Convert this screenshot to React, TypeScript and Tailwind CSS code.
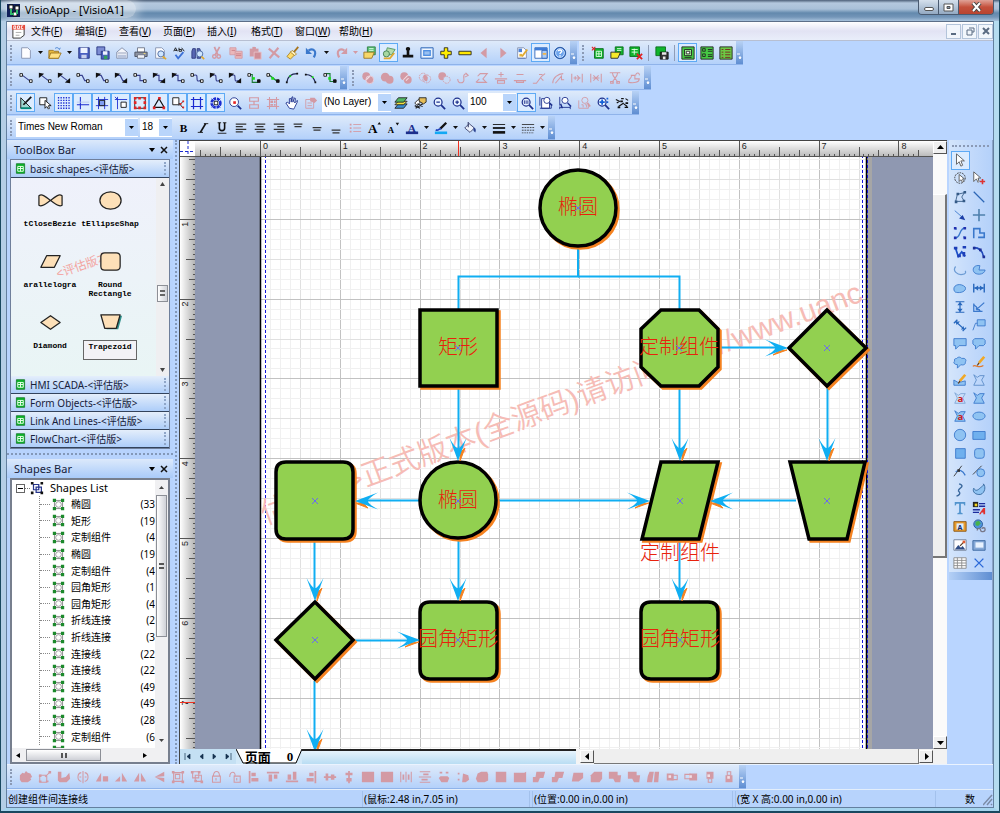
import { Fragment, type ReactNode } from "react";

const NAVY = "#1c2f8c";
const BLUE = "#3a78cc";
const SKY = "#8fc3f2";
const INK = "#111111";
const PALE = "#d39aa4";
const GREEN = "#0fb52c";
const GOLD = "#e0a92e";

function L(d: string, c = INK, w = 1) {
  return <path d={d} fill="none" stroke={c} strokeWidth={w} />;
}

function F(d: string, c = INK, s = "none") {
  return <path d={d} fill={c} stroke={s} />;
}

const page = F("M3 2h7l3 3v9H3z", "#fdfdff", "#8390ad");
const lens = <><circle cx="7" cy="7" r="4.5" fill="#e8f3ff" stroke={NAVY} strokeWidth="1.4" />{L("M10.5 10.5L15 15", NAVY, 2)}</>;
const sheet = <>{F("M2 1h12v14H2z", GREEN, "#0b6b1c")}{L("M4 5h8v7H4zM8 5v7M4 8h8", "#e8ffe8", 1.4)}</>;

// 16x16 glyphs shared by every toolbar
const icons: Record<string, ReactNode> = {
  New: page,
  Open: <>{F("M1 5h5l1 1h5v8H1z", "#e6b93f", "#9a7420")}{F("M3 8h12l-3 6H1z", "#ffe184", "#9a7420")}{L("M8 3c2-2 4-1 5 1l1-2", BLUE)}</>,
  Save: <>{F("M2 2h12v12H2z", "#4a5fc0", "#27357f")}{F("M4 2h8v6H4z", "#eef3ff")}{F("M5 10h6v4H5z", "#c9d1ee")}</>,
  "Save All": <>{F("M1 1h9v9H1z", "#7d8dd4", "#27357f")}{F("M6 6h9v9H6z", "#4a5fc0", "#27357f")}{F("M8 6h5v4H8z", "#eef3ff")}{F("M9 11h4v4H9z", "#35a05c")}</>,
  Mail: <>{F("M2 7l6-5 6 5v7H2z", "#f4f6fb", "#7f8aa6")}{F("M3 10h10v4H3z", "#b9c4dc")}{L("M3 8h10", "#8995b2")}</>,
  Print: <>{F("M4 2h8v5H4z", "#fff", "#6d7485")}{F("M1 7h14v5H1z", "#8d93a1", "#484e5d")}{F("M4 10h8v4H4z", "#f3f5fa", "#6d7485")}{F("M11 8h2v1h-2z", "#ffe36a")}</>,
  Preview: <>{page}<circle cx="9" cy="9" r="3.5" fill="#cfe6ff" stroke="#45639d" />{L("M11 12l4 3", GOLD, 2)}</>,
  Spelling: <>{L("M2 6l2-4 2 4M3 5h3M8 2v4h3V4H8M11 2l3 4", INK)}{L("M4 10l3 4 6-7", "#3a6fd6", 2)}</>,
  Find: <>{F("M2 3h3v11H1V6zM7 3h3l1 3v8H7z", "#5867b4", "#2d397b")}<circle cx="10" cy="9" r="3.5" fill="#cfe6ff" stroke="#45639d" />{L("M12 12l3 3", GOLD, 2)}</>,
  Cut: <>{L("M5 1l4 9M11 1L6 10", PALE, 2)}<circle cx="5" cy="12" r="2" fill="none" stroke={PALE} strokeWidth="1.6" /><circle cx="10" cy="12" r="2" fill="none" stroke={PALE} strokeWidth="1.6" /></>,
  Copy: <>{F("M1 2h7v8H1z", "#eab7ba", PALE)}{F("M7 6h8v8H7z", "#eab7ba", PALE)}{L("M8 9h6M8 11h6M3 5h4", "#c87c85")}</>,
  Paste: <>{F("M2 3h10v9H2z", PALE)}{F("M7 7h8v8H7z", "#cf8e97", "#e8c2c8")}{F("M5 1h4v3H5z", PALE)}</>,
  Delete: L("M2 3l12 10M13 2L3 14", PALE, 2.4),
  "Format Painter": <>{L("M14 1l-5 6", "#a8741d", 2)}{F("M6 6l4 4-5 5-4-3z", "#ffdc6b", "#a8852a")}{F("M7 5l5 4-2 2-5-4z", "#fff1c0", "#a8852a")}</>,
  Undo: <>{L("M4 5c6-3 10 1 6 8", BLUE, 2.4)}{F("M1 2v7h7z", BLUE)}</>,
  Redo: <>{L("M12 5C6 2 2 6 6 13", PALE, 2.4)}{F("M15 2v7H8z", PALE)}</>,
  Library: <>{F("M5 1h9v9H5z", "#59c277", "#2e7d45")}{F("M1 7h12l-3 7H1z", "#f7d76a", "#9a7420")}{L("M7 3h5M7 5h5", "#e5ffe9")}</>,
  "Shape Tools": <>{F("M6 2l9 2-4 6H4z", "#b7dcab", "#4d9460")}<circle cx="5" cy="9" r="3.5" fill="#a7d8a0" stroke="#3f7c50" />{L("M2 14h7l5-6", GOLD, 2)}</>,
  Stamp: <>{F("M8 1a2.500 2.500 0 0 1 1.500 4.500V10H14v3H2v-3h4.500V5.500A2.500 2.500 0 0 1 8 1z")}</>,
  Frame: <>{F("M1 2h14v12H1z", "#cfe2fa", "#2760b4")}{F("M3 4h10v8H3z", "#4f8fe2", "#fff")}{L("M5 7h6M5 9h6", "#d8eafe")}</>,
  Add: <>{F("M6 2h4v4h4v4h-4v4H6v-4H2V6h4z", "#ffee00", "#222")}</>,
  Remove: F("M1 6h14v4H1z", "#ffe600", "#222"),
  Back: F("M11 2v12L4 8z", PALE),
  Forward: F("M5 2v12l7-6z", PALE),
  Properties: <>{page}{F("M4 3h4v4H4z", "#4d82d6")}{F("M5 9h3v3H5z", "#e3b33c")}{L("M14 4L8 12", GOLD, 2.2)}{L("M3 14h9", "#5b77b2")}</>,
  Panels: <>{F("M1 2h14v12H1z", "#fff", "#2b63b8")}{F("M1 2h14v3H1z", "#3f7dd8")}{F("M9 5h6v9H9z", "#aacbf4", "#2b63b8")}{F("M10 8h4v2h-4z", "#f2b64a")}</>,
  Help: <><circle cx="8" cy="8" r="6.500" fill="#3d78d0" stroke="#20509a" /><circle cx="8" cy="8" r="5" fill="#6da4ec" stroke="#d8e9ff" />{L("M6 6c0-2 4-2 4 0 0 1.500-2 1.500-2 3M8 10.500v1.500", "#fff", 1.6)}</>,
  "New Sheet": <>{F("M4 3h10v11H4z", GREEN, "#0b6b1c")}{L("M6 6h6v6H6zM9 6v6M6 9h6", "#e8ffe8")}{L("M1 1l4 4M5 1L1 5", "#e02020", 1.2)}</>,
  "Open Sheet": <>{F("M6 1h9v9H6z", GREEN, "#0b6b1c")}{F("M1 7h11l-3 7H1z", "#f7ea2a", "#222")}{L("M8 3h5M8 5h5", "#e8ffe8")}</>,
  "Delete Sheet": <>{F("M1 1h11v11H1z", GREEN, "#0b6b1c")}{L("M3 4h7M3 7h7M6 3v7", "#e8ffe8")}{L("M9 9l6 6M15 9l-6 6", "#e02020", 2)}</>,
  "Save Sheet": <>{F("M1 1h11v10H1z", GREEN, "#0b6b1c")}{F("M6 7h9v8H6z", "#333", "#111")}{F("M8 7h5v3H8zM9 12h3v3H9z", "#e8e8e8")}</>,
  "Large Icons": <>{F("M1 1h14v14H1z", "#46c944", "#222")}{F("M4 4h8v7H4z", "#a7f29c", "#222")}{F("M6 6h4v3H6z", "#fff", "#222")}{L("M4 13h8", "#222")}</>,
  "Small Icons": <>{F("M1 1h14v14H1z", "#46c944", "#222")}{L("M3 3h3v3H3zM3 9h3v3H3zM9 4h5M9 6h5M9 10h5M9 12h5", "#222")}</>,
  "Detail List": <>{F("M1 1h14v14H1z", "#6bc944", "#222")}{L("M3 4h2M7 4h6M3 7h2M7 7h6M3 10h2M7 10h6M3 13h2M7 13h6", "#722")}</>,
  Draft: <>{F("M2 2v12h12z", "#9fd8d2", INK)}{L("M14 1L5 10", INK, 2)}{L("M2 14h12", "#087", 2)}</>,
  Pick: <>{F("M2 2h8v8H2z", "#fff", INK)}{F("M8 5v9l2-2 2 3 1-1-1-3h3z", "#fff", INK)}</>,
  Dots: <>{[2, 5, 8, 11, 14].map((y) => <path key={y} d={`M1 ${y}h15`} stroke="#1b2bd0" strokeWidth="1.500" strokeDasharray="1.500 1.500" />)}</>,
  Guides: <>{L("M5 1v14M1 10h14", "#1b2bd0", 1.2)}{L("M1 7h14", "#b9c8ee")}</>,
  "Snap Grid": <>{L("M4 1v14M11 1v14M1 4h14M1 11h14", "#1b2bd0")}{F("M5 5h6v6H5z", "#7f9df2", INK)}</>,
  "Snap Ruler": <>{L("M1 4h14M4 1v14M1 1l3 3", "#1b2bd0")}{F("M8 7h6v6H8z", "#fff", INK)}</>,
  "Snap Box": <>{L("M2 2h12v12H2z", INK)}{F("M1 1h3v3H1zM6 1h3v3H6zM12 1h3v3h-3zM1 6h3v3H1zM12 6h3v3h-3zM1 12h3v3H1zM6 12h3v3H6zM12 12h3v3h-3z", "#e52222")}</>,
  "Snap Vertex": <>{L("M8 3L2 13h12z", INK, 1.3)}{F("M7 1h3v3H7zM1 12h3v3H1zM12 12h3v3h-3z", "#e52222")}</>,
  "Snap Glue": <>{F("M2 2h7v8H2z", "#fff", INK)}{L("M9 8l5 6M9 11l5-5", INK)}{F("M10 8h2v2h-2zM13 5h2v2h-2zM13 12h2v2h-2z", "#e52222")}</>,
  "Snap Lines": <>{L("M4 1v14M12 1v14M1 4h14M1 12h14", "#1b2bd0", 1.4)}</>,
  "Snap Page": <>{L("M3 3l10 10M13 3L3 13", "#1b2bd0", 1)}<circle cx="8" cy="8" r="5" fill="none" stroke="#1b2bd0" strokeWidth="3" strokeDasharray="3 1" />{F("M6 6h4v4H6z", "#fff", INK)}</>,
  Zoom: <><circle cx="7" cy="7" r="5" fill="#fff" stroke={NAVY} />{F("M6 6h3v3H6z", "#e52222")}{L("M11 11l4 4", NAVY, 2)}</>,
  Hand: F("M5 14L1 8l2-1 2 2V3h2v4l1-6h1v6l2-5 1 1-1 5 3-3v2l-3 6-1 2z", "#fff", NAVY),
  Distribute: <>{L("M3 2h10v4H3zM3 10h10v4H3zM8 6v4", PALE, 1.4)}</>,
  "Align Grid": <>{L("M1 4h14M1 12h14M4 1v14M12 1v14", PALE, 1.2)}{F("M5 5h3v3H5zM9 5h2v3H9zM5 9h3v2H5zM9 9h2v2H9z", PALE)}</>,
  "Page Hand": <>{L("M2 4h9v10H2zM4 8h5M4 11h5", PALE)}{F("M7 2h5l3 3-3 3-5-2z", PALE)}</>,
  Layers: <>{F("M5 9h10l-4 5H1z", "#3a8dd0", "#222")}{F("M5 6h10l-4 4H1z", "#f1e13c", "#222")}{F("M5 2h10l-4 5H1z", "#53b862", "#222")}</>,
  "Layer Props": <>{F("M2 8l4-4 3 2-4 5z", "#fff", "#222")}{F("M7 2h8v5l-3 2-5-3z", "#e6bd57", "#222")}{L("M2 11l6 3M5 9l6 3M3 14l8-5", "#222", 1.4)}</>,
  "Zoom Out": <>{lens}{L("M5 7h4", NAVY, 1.4)}</>,
  "Zoom In": <>{lens}{L("M5 7h4M7 5v4", NAVY, 1.4)}</>,
  "Zoom 100": <>{lens}{L("M5 5v4M7 5v4M9 5v4", NAVY)}</>,
  "Fit Page": <>{F("M3 3h9v11H3z", "#fff", NAVY)}{L("M1 1v10M1 14h13v-3", NAVY)}<circle cx="9" cy="5" r="3.500" fill="#fff" stroke={NAVY} />{L("M12 8l3 3", NAVY, 2)}</>,
  "Fit Width": <>{L("M2 1v10M2 12v3M14 11v4M2 13h12", NAVY)}<circle cx="8" cy="5" r="3.500" fill="#fff" stroke={NAVY} />{L("M11 8l4 4M3 9l2 5", NAVY, 1.6)}</>,
  "Fit Selection": <>{L("M2 5v9h11V9M5 10h2v3M9 10h2v3", PALE)}<circle cx="9" cy="5" r="3.500" fill="none" stroke={PALE} />{L("M12 8l3 4", PALE, 2)}</>,
  "Zoom Area": <>{lens}{L("M4 7h6M7 4v6", "#1560d8", 2)}{F("M12 2h2v2h-2zM12 6h2v2h-2z", "#1560d8")}</>,
  Path: <>{L("M1 4l4 2-3 2M7 3h3M12 3l3 2M4 12l6-4M10 9l4 3M11 13h4", INK, 1.3)}{F("M6 5h3v2H6zM12 7h3v2h-3zM3 12h3v2H3z")}</>,
  Bold: <text x="3" y="13" fontSize="13" fontWeight="900" fontFamily="Liberation Serif, serif">B</text>,
  Italic: <>{L("M11 3L5 13", INK, 2)}{L("M9 3h5M2 13h6", INK)}</>,
  Underline: <>{L("M5 2v6c0 4 6 4 6 0V2", INK, 1.8)}{L("M3 14h10M3 2h4M9 2h4", INK)}</>,
  Left: L("M2 3.500h12M2 6.500h8M2 9.500h12M2 12.500h8", "#333", 1.4),
  Center: L("M2 3.500h12M4 6.500h8M2 9.500h12M4 12.500h8", "#333", 1.4),
  Right: L("M2 3.500h12M6 6.500h8M2 9.500h12M6 12.500h8", "#333", 1.4),
  Top: L("M3 3.500h10M4 6.500h8", "#333", 1.4),
  Middle: L("M3 7.500h10M4 10.500h8", "#333", 1.4),
  Bottom: L("M3 10.500h10M4 13.500h8", "#333", 1.4),
  Bullets: <>{L("M6 4h9M6 8h9M6 12h9", PALE)}{F("M2 3h2v2H2zM2 7h2v2H2zM2 11h2v2H2z", PALE)}</>,
  Grow: <><text x="1" y="14" fontSize="15" fontWeight="700" fontFamily="Liberation Serif, serif">A</text>{F("M12 4h4l-2-3z")}</>,
  Shrink: <><text x="2" y="14" fontSize="10" fontWeight="700" fontFamily="Liberation Serif, serif">A</text>{F("M11 2h4l-2 3z")}</>,
  "Font Color": <><text x="3" y="12" fontSize="13" fontWeight="700" fill={NAVY} fontFamily="Liberation Serif, serif">A</text>{F("M1 12h14v3H1z", NAVY)}</>,
  "Line Color": <>{L("M14 2L7 9", INK, 2.6)}{L("M2 10c3 2 4-2 6-1", "#2244bb", 2)}{F("M1 12h14v3H1z", "#12a8f4")}</>,
  "Fill Color": <>{F("M7 3l6 5-5 5-6-5z", "#eaf0fb", "#39406a")}{F("M12 7c3 1 3 4 2 6l-2-2z", "#29408f")}{L("M6 1v6", "#39406a", 1.3)}</>,
  "Line Weight": <>{L("M1 4h14", INK)}{L("M1 8h14", INK, 2)}{L("M1 13h14", INK, 3)}</>,
  "Line Style": <>{L("M1 4h14", "#333")}<path d="M1 7.500h14M1 10.500h14" stroke="#333" strokeDasharray="2 1" /><path d="M1 13.500h14" stroke="#333" strokeDasharray="1 1" /></>,
};

// connector glyphs: route path, arrow markers at either end
function Connector({ d, start, end, green }: { d: string; start?: boolean; end?: boolean; green?: boolean }) {
  return (
    <>
      {L(d, green ? "#1a7a35" : "#39428f", 1.3)}
      {start ? F("M1 2v6l6-5z") : F("M1 3h3v3H1z", "#fff", INK)}
      {end ? F("M15 14V8l-6 5z") : F("M12 10h3v3h-3z", green ? INK : "#fff", INK)}
      {green && F("M6 7h3v3H6z", "#19e019")}
    </>
  );
}

const lineRoute = "M4 5l8 6";
const stepRoute = "M4 5h4v6h4";
const curveRoute = "M4 5c8-3 0 9 8 6";
const connectors: [string, ReactNode][] = [
  ["Line", <Connector d={lineRoute} />],
  ["Line start arrow", <Connector d={lineRoute} start />],
  ["Line both arrows", <Connector d={lineRoute} start end />],
  ["Polyline", <Connector d="M4 5h3l3 6h2" />],
  ["Polyline start arrow", <Connector d="M4 5h3l3 6h2" start />],
  ["Polyline both arrows", <Connector d="M4 5h3l3 6h2" start end />],
  ["Step", <Connector d={stepRoute} />],
  ["Step both arrows", <Connector d={stepRoute} start end />],
  ["Step start arrow", <Connector d={stepRoute} start />],
  ["Curve", <Connector d={curveRoute} />],
  ["Curve start arrow", <Connector d={curveRoute} start />],
  ["Curve both arrows", <Connector d={curveRoute} start end />],
  ["Port step", <Connector d="M3 4h3v9h7" green />],
  ["Port line", <Connector d="M3 4l10 8" green />],
  ["Arc", <>{L("M2 13C3 6 7 3 14 3", "#1d2550", 1.4)}{F("M1 12h2v2H1zM13 2h2v2h-2z")}{F("M5 5h2v2H5z", "#19e019")}</>],
  ["Arc right", <>{L("M2 4c6 0 9 3 11 9", "#1d2550", 1.4)}{F("M1 3h2v2H1zM12 12h2v2h-2z")}{F("M9 6h2v2H9z", "#19e019")}</>],
  ["Spline", <Connector d="M3 3h5v9h6" green />],
];

const pale = (d: string) => L(d, PALE, 1.2);
const booleans: [string, ReactNode][] = [
  ["Combine", <><circle cx="6" cy="6" r="4.500" fill={PALE} /><circle cx="10" cy="10" r="4.500" fill={PALE} stroke="#e8d5e2" />{L("M6 10l4-4", "#f3dfe4", 1.4)}</>],
  ["Union", <><circle cx="6" cy="7" r="5" fill={PALE} /><circle cx="11" cy="10" r="4.500" fill={PALE} /></>],
  ["Exclude", <><circle cx="6" cy="6" r="4.500" fill={PALE} /><circle cx="10" cy="10" r="4.500" fill={PALE} />{L("M5 10l5-5M8 11l3-3", "#f3dfe4", 1.2)}</>],
  ["Intersect", <><circle cx="6" cy="7" r="4.500" fill="none" stroke={PALE} strokeDasharray="2 1" /><circle cx="10" cy="9" r="4.500" fill="none" stroke={PALE} strokeDasharray="2 1" />{F("M7 4c4 1 5 5 3 8-4-1-5-5-3-8z", PALE)}</>],
  ["Subtract", <><circle cx="6" cy="6" r="4.500" fill={PALE} /><circle cx="11" cy="10" r="4" fill="#c9dcf7" stroke={PALE} strokeDasharray="2 1" /></>],
  ["Rotate", pale("M2 9c0 6 8 6 7 0s2-7 5-4M11 2l3 3-4 2")],
  ["Reshape", pale("M2 13h11L9 9l5-6H6L3 6M1 13l4-4")],
  ["Raise", pale("M8 1v6M5 4h6M1 9h14M4 11h8v3H4z")],
  ["Lower", pale("M4 4h8M1 11h14M4 13h8v-2H4z")],
  ["Join", pale("M1 14h4l6-8 4-3M8 4h4M10 8l3 3")],
  ["Fillet", pale("M2 14C2 8 8 3 14 3M5 14l7-8v4h3")],
  ["Space H", pale("M2 3v10M14 3v10M4 8h8M6 6v4M8 5l3 3-3 3")],
  ["Pack H", pale("M2 3v10M14 3v10M4 8h8M5 5l3 3-3 3M11 5L8 8l3 3")],
  ["Scissors", pale("M2 2h12M5 2c0 5 5 7 6 11M11 2c0 5-5 7-6 11M3 12h3v2H3zM10 12h3v2h-3z")],
  ["Offset", pale("M2 13c-1-6 4-3 3-8h4v4h5c0 4-6 5-12 4zM10 5c0-4 5-3 4 0")],
];

const solid = (d: string) => <>{F(d, PALE)}</>;
const arrangeGlyphs: ReactNode[] = [
  solid("M1 6l3-3 2 1 2-3 2 2 3 1 2 4-2 1 1 2-4 3H3l-2-3z"),
  <>{pale("M2 6h8v8H2zM8 8l5-5")}{solid("M12 1h3v3h-3zM1 5h3v3H1zM1 12h3v2H1zM9 12h3v2H9z")}</>,
  solid("M1 2h4v7l5-1 4-5 1 7-4 4H3l-2-2z"),
  <>{pale("M8 1v14M6 3C1 4 1 12 6 13M10 3c5 1 5 9 0 10M4 8h2M10 8h2")}</>,
  solid("M7 13V3L1 13zM9 13V7h6v6z"),
  solid("M9 3v10h6zM1 13h6V7z"),
  solid("M7 3v10H1zM9 3v10h6z"),
  solid("M14 2v5L3 8zM14 14V9L3 8z"),
  <>{pale("M3 3h10v10H3zM5 5h5v5H5z")}{solid("M1 1h3v3H1zM12 1h3v3h-3zM1 12h3v3H1zM12 12h3v3h-3z")}</>,
  <>{pale("M3 2h7v7H3zM6 6h7v7H6z")}{solid("M1 1h3v3H1zM9 1h3v3H9zM5 11h3v3H5zM12 12h3v3h-3z")}</>,
  pale("M4 7h9v7H4zM5 7c0-7 7-7 7 0M8 9v3"),
  pale("M7 7h7v7H7zM2 8c0-7 7-7 6-1M10 9v3"),
  solid("M2 1h2v14H2zM5 3h5v4H5zM5 9h8v4H5z"),
  solid("M1 2h14v2H1zM3 5h4v8H3zM9 5h4v5H9z"),
  solid("M1 12h14v2H1zM3 5h4v6H3zM9 2h4v9H9z"),
  solid("M12 1h2v14h-2zM6 3h5v4H6zM3 9h8v4H3z"),
  solid("M1 7h14v2H1zM3 4h3v8H3zM9 5h4v6H9z"),
  solid("M7 1h2v14H7zM4 3h8v3H4zM5 9h6v4H5z"),
  solid("M1 2h14v12H1z"),
  solid("M1 2h14v12H1z"),
  <>{pale("M2 2v12M8 2v12M14 2v12")}{solid("M4 5h2v6H4zM10 5h2v6h-2z")}</>,
  <>{pale("M2 2h12M1 8h14M2 14h12")}{solid("M6 4h6v2H6zM4 10h7v2H4z")}</>,
  solid("M3 2h3v2H3zM10 2h3v2h-3zM4 7h8l2 2-2 5H5L2 9z"),
  solid("M2 3h2v2H2zM2 10h2v2H2zM8 4l6 2 1 5-4 3H7z"),
  solid("M3 4l4-2h7l1 3v7l-4 2H3l-2-4z"),
  solid("M2 2h12v12H2z"),
  solid("M1 3h12l2-1v12H1z"),
  solid("M5 2h10l-2 7H9l-2 5H1V8h3z"),
  solid("M5 2h10l-2 7H9l-2 5H1V8h3z"),
  solid("M4 3h11v6l-5 4H2l1-5z"),
  solid("M6 2h9v8l-3 4H2V6z"),
  solid("M1 2h10v4h4l-1 8H8l-2-4H1z"),
  solid("M1 2h10v4h4l-1 8H8l-2-4H1z"),
  solid("M4 2h5L7 14H1l1-7zM10 2h5l-1 12H9z"),
  <>{solid("M2 4h8v8H2z")}{pale("M8 6h6v5H8z")}{F("M4 6h3v3H4z", "#f1dfe6")}</>,
  <>{solid("M6 4h9v8H6z")}{pale("M1 5h6v5H1z")}{F("M6 6h3v3H6z", "#f1dfe6")}</>,
  <>{solid("M4 2h8v8H4z")}{pale("M6 10h4v4H6z")}{F("M5 5h3v3H5z", "#f1dfe6")}</>,
  <>{solid("M4 6h8v8H4z")}{pale("M6 2h4v4H6z")}{F("M6 7h3v3H6z", "#f1dfe6")}</>,
];

const pencil = <>{L("M14 2L8 9", "#f0a826", 3)}{L("M8 9l-2 3", "#663b12", 1.4)}</>;
const freeform = "M2 2l4 3 3-2h5l-3 5 3 6H2l3-6z";
const blob = "M1 9c0-5 8-7 13-2 2 5-6 7-10 6-2 0-3-2-3-4z";
const drawTools: [string, ReactNode][] = [
  ["Pointer", F("M4 1v12l3-3 2 5 2-1-2-5h4z", "#fff", "#555")],
  ["", null],
  ["Lasso", <><circle cx="8" cy="8" r="6" fill="none" stroke="#333" strokeDasharray="2 1" />{F("M7 4v8l2-2 2 3 1-1-1-3h2z", "#fff", "#555")}</>],
  ["Pointer add", <>{F("M2 1v11l3-3 2 4 1-1-1-4h3z", "#fff", "#555")}{L("M9 12h6M12 9v6", "#d33", 1.8)}</>],
  ["Edit points", <>{L("M3 13l2-8 8-2-3 5 3 5z", "#345a86")}{F("M2 12h3v3H2zM4 3h3v3H4zM12 1h3v3h-3zM11 11h3v3h-3z", "#345a86")}</>],
  ["Line", L("M2 2l12 12", "#2c66b5", 1.4)],
  ["Arrow line", <>{L("M2 3l8 7", BLUE)}{F("M14 14l-7-2 4-4z", "#1c3fa8")}</>],
  ["Cross", L("M8 1v14M1 8h14", "#4e80ad", 1.8)],
  ["Curve line", <>{L("M2 14C10 13 6 3 14 2M2 2l2 2M12 12l2 2", BLUE, 1.6)}{F("M1 1h3v3H1zM12 1h3v3h-3zM1 12h3v3H1zM12 12h3v3h-3z", "#2030b0")}</>],
  ["Polyline", L("M2 14V3h7v5h5v5H7", BLUE, 1.8)],
  ["Bezier", <>{L("M3 4l3 9 4-5 4 5", "#1d50c8", 2)}{F("M1 2h4v3H1zM5 11h4v3H5zM11 1h4v3h-4zM11 8h3v5h-3z", "#1d3fb8")}</>],
  ["Arc line", <>{L("M2 3c7 0 10 4 11 10", "#2149ba", 1.8)}{F("M1 2h3v3H1zM8 4h3v3H8zM12 12h3v3h-3z", "#1d2f98")}</>],
  ["Open arc", L("M3 4c-4 5 2 10 8 9 3 0 4-2 3-4", "#6d9cd4", 1.4)],
  ["Pie", F("M9 3C3 2 0 6 2 10s12 4 13-2H8z", SKY, BLUE)],
  ["Closed curve", F(blob, SKY, BLUE)],
  ["Dim width", <>{L("M2 3v10M14 3v10M3 8h10", "#2868bd", 1.6)}{F("M3 8l4-3v6zM13 8L9 5v6z", "#2868bd")}</>],
  ["Dim height", <>{L("M3 2h10M3 14h10M8 3v10", "#2868bd", 1.4)}{F("M8 2l-3 4h6zM8 14l-3-4h6z", "#2868bd")}</>],
  ["Dim angle", L("M2 4v9h10M2 5c2 2 4 5 8 8M5 11L14 3M5 11V7M5 11h4", BLUE, 1.4)],
  ["Dim line", <>{L("M3 4l10 9M1 6l4-4M11 15l4-4", "#2868bd", 1.5)}{F("M3 4h5l-4 4zM13 13H9l3-4z", "#2868bd")}</>],
  ["Callout line", <>{F("M6 2h9v7H6z", SKY, BLUE)}{L("M6 6L4 6 1 14", BLUE)}</>],
  ["Callout", F("M1 3h14v8H7l-4 4v-4H1z", SKY, BLUE)],
  ["Round callout", F("M3 3h10l2 2v4l-2 2H8l-4 4v-4H3L1 9V5z", SKY, BLUE)],
  ["Cloud", F("M4 4c3-3 5-1 6 0 4-1 6 2 4 4 1 3-3 4-5 3l-4 4v-4C1 11 0 8 2 7 1 5 2 4 4 4z", SKY, BLUE)],
  ["Pencil", <>{pencil}{L("M1 13c3-3 6 3 12-1", "#e07b30", 1.4)}</>],
  ["Pencil area", <>{F("M1 8l5 3 8-2v5H1z", SKY, BLUE)}{pencil}</>],
  ["Open freeform", L(freeform, "#5a8cc8")],
  ["Text freeform", <>{L(freeform, "#7da5d5")}<text x="5" y="13" fontSize="11" fontWeight="700" fill="#cc2222">a</text></>],
  ["Freeform", F(freeform, SKY, BLUE)],
  ["Filled text", <>{F(freeform, SKY, BLUE)}<text x="5" y="13" fontSize="11" fontWeight="700" fill="#cc2222">a</text></>],
  ["Ellipse", <ellipse cx="8" cy="8" rx="7" ry="4.500" fill={SKY} stroke={BLUE} />],
  ["Circle", <circle cx="8" cy="8" r="6.500" fill={SKY} stroke={BLUE} />],
  ["Rectangle", F("M1 4h14v9H1z", "#6fb0ee", BLUE)],
  ["Square", F("M3 3h11v11H3z", "#6fb0ee", BLUE)],
  ["Rounded", <rect x="3" y="3" width="11" height="11" rx="3" fill={SKY} stroke={BLUE} />],
  ["Tangent", <>{L("M1 14L10 2", "#333")}{L("M3 9c4-3 8-2 11 4", BLUE, 1.4)}{F("M5 6h3v3H5z", "#333")}</>],
  ["Tangent area", <>{L("M1 12L11 2", "#333")}<circle cx="10" cy="10" r="4.500" fill={SKY} stroke={BLUE} /></>],
  ["Spline", L("M7 1c9 3-4 6 0 9 2 2 0 4-3 5", "#3c6a9e", 1.6)],
  ["Closed spline", F("M2 6c2 4 5 2 7 0s5-3 4-5c3 3 2 10-3 12C4 14 0 10 2 6z", SKY, "#31659c")],
  ["Text", F("M2 1h12v4h-1l-1-2H9v10l2 1v1H5v-1l2-1V3H4L3 5H2z", "#5294cd")],
  ["Rich text", <>{F("M1 1h6v6H1z", "#222")}{F("M3 3h3v3H3z", "#f5d51e")}{L("M8 3h7M8 6h7M1 10h8M1 13h7", "#1d2b9c", 1.6)}{F("M8 15l5-7h2v7h-2v-2h-2l-1 2z", "#e03030")}</>],
  ["Art text", <>{F("M1 3h14v11H1z", "#e79c2d", "#8a5510")}{F("M4 5h8v7H4z", "#dcecff")}<text x="5" y="12" fontSize="8" fontWeight="700" fill="#15306e">A</text></>],
  ["Hyperlink", <><circle cx="7" cy="6" r="5" fill="#4f94dd" stroke="#27568f" />{F("M4 3l4-1 2 3-3 3-3-1z", "#47b24c")}{L("M6 13c0-4 4-2 4 0s5 2 5-1-3-2-4-1", "#778", 1.5)}</>],
  ["Picture", <>{F("M1 2h14v12H1z", "#fdfdff", "#6d7b96")}{F("M2 13l4-5 3 3 2-2 3 4z", "#2f4c86")}{L("M8 9l4-4", "#5b3a20", 1.4)}{F("M11 3h3v3h-3z", "#e05b32")}</>],
  ["Container", <>{F("M1 3h14v11H1z", "#86a9d8", "#39659e")}{F("M4 5h9v6H4z", "#e8f2ff")}</>],
  ["Grid", <>{F("M1 2h14v12H1z", "#fff", "#888")}{L("M1 5h14M1 8h14M1 11h14M5 2v12M10 2v12", "#888")}</>],
  ["Close", L("M3 3l10 10M13 3L3 13", "#2b68d8", 1.6)],
];

function Glyph({ children, className = "size-4" }: { children: ReactNode; className?: string }) {
  return (
    <svg className={`${className} shrink-0`} viewBox="0 0 16 16" aria-hidden="true">
      {children}
    </svg>
  );
}

function Tool({ label, active, children }: { label: string; active?: boolean; children?: ReactNode }) {
  return (
    <button
      type="button"
      aria-label={label}
      className={`flex h-[19px] w-[19px] shrink-0 items-center justify-center ${
        active ? "border border-[#5eaaf5] bg-[#dcecff]" : ""
      }`}
    >
      <Glyph className="size-[14px]">{children ?? icons[label]}</Glyph>
    </button>
  );
}

function Arrow({ pale: faded }: { pale?: boolean }) {
  return (
    <button type="button" aria-label="More" className="flex h-[19px] w-[10px] shrink-0 items-center justify-center">
      <svg width="5" height="3" aria-hidden="true">
        <path d="M0 0h5L2.500 3z" fill={faded ? PALE : INK} />
      </svg>
    </button>
  );
}

function Sep() {
  return <span className="mx-[3px] h-4 w-px shrink-0 bg-[#8e9db8]" />;
}

function Bar({ children, label }: { children: ReactNode; label: string }) {
  return (
    <div
      role="toolbar"
      aria-label={label}
      className="flex h-6 shrink-0 items-center border-b border-[#8fb3ea] bg-linear-to-b from-[#deeafa] to-[#b4d1fa] pl-[3px]"
    >
      <span className="mr-1 h-4 border-l-2 border-dotted border-[#8b9ab5]" />
      {children}
      <span className="ml-px flex h-full w-[7px] items-end bg-linear-to-b from-[#b8d2f5] to-[#5f8ed2] pb-1">
        <svg width="6" height="7" aria-hidden="true">
          <path d="M1 1h3M3 4h2L4 6z" stroke="#fff" fill="#fff" />
        </svg>
      </span>
    </div>
  );
}

function Combo({ label, value, className }: { label: string; value: string; className: string }) {
  return (
    <div className={`relative flex h-[19px] shrink-0 bg-white ${className}`}>
      <select
        aria-label={label}
        className="h-[17px] w-full appearance-none bg-white pl-[2px] font-['Liberation_Sans',sans-serif] text-[10px] leading-4 text-black outline-none"
      >
        <option>{value}</option>
      </select>
      <span className="pointer-events-none absolute inset-y-px right-0 flex w-[13px] items-center justify-center bg-[#b9d5fb]">
        <svg width="5" height="3" aria-hidden="true">
          <path d="M0 0h5L2.500 3z" />
        </svg>
      </span>
    </div>
  );
}

const menus = [
  ["文件", "F"],
  ["编辑", "E"],
  ["查看", "V"],
  ["页面", "P"],
  ["插入", "I"],
  ["格式", "T"],
  ["窗口", "W"],
  ["帮助", "H"],
];

function TitleBar() {
  return (
    <header className="flex h-[21px] shrink-0 items-start justify-between bg-[linear-gradient(180deg,#4c5f78_0,#b4c8de_3px,#a9c0d8_9px,#6389ad_13px,#7395b8_17px,#a7c2dc_21px)] pl-[5px] pr-[5px]">
      <div className="flex items-center gap-[3px] rounded-full bg-white/45 pr-3 pt-[2px] shadow-[0_0_8px_4px_rgba(255,255,255,0.35)]">
        <svg className="size-4" viewBox="0 0 16 16" aria-hidden="true">
          <path d="M1 2h13v13H1z" fill="#10205a" />
          <path d="M3 3h4v4H3zM9 4h4v4H9zM7 10h4v4H7z" fill="#fff" stroke="#111" />
          <path d="M5 7v5h3M11 8v4" stroke="#2fb56b" fill="none" strokeWidth="2" />
        </svg>
        <h1 className="text-[11px] leading-4 text-black">VisioApp - [VisioA1]</h1>
      </div>
      <div className="flex h-[15px] overflow-hidden rounded-b border border-t-0 border-[#4a5a70]">
        <button type="button" aria-label="Minimize" className="flex w-5 items-end justify-center border-r border-[#4a5a70] bg-linear-to-b from-[#d5e0ec] to-[#93a9c2] pb-[3px]">
          <span className="h-[4px] w-[10px] rounded-sm border border-[#555] bg-white" />
        </button>
        <button type="button" aria-label="Maximize" className="flex w-5 items-center justify-center border-r border-[#4a5a70] bg-linear-to-b from-[#d5e0ec] to-[#93a9c2]">
          <svg width="11" height="9" aria-hidden="true">
            <path d="M1 1h9v7H1z" fill="#fff" stroke="#555" />
            <path d="M4 3.500h3v2H4z" fill="#8195ad" stroke="#555" />
          </svg>
        </button>
        <button type="button" aria-label="Close window" className="flex w-[34px] items-center justify-center bg-linear-to-b from-[#dfa298] via-[#c4503c] to-[#b84430]">
          <svg width="11" height="10" aria-hidden="true">
            <path d="M2 1l7 8M9 1L2 9" stroke="#444" strokeWidth="4" />
            <path d="M2 1l7 8M9 1L2 9" stroke="#fff" strokeWidth="2" />
          </svg>
        </button>
      </div>
    </header>
  );
}

function MenuBar() {
  return (
    <nav className="flex h-5 shrink-0 items-center border-t border-[#5d6f88] border-b border-b-[#b7bfd2] bg-linear-to-b from-white via-[#e2e3f4] to-[#e9eefa] pl-1">
      <svg className="mr-[5px] size-[15px]" viewBox="0 0 16 16" aria-hidden="true">
        <path d="M2 4h12v8l-4 3H2z" fill="#fff" stroke="#333" />
        <path d="M1 1h14v5H1z" fill="#e44a3c" />
        <path d="M3 2h2v3H3zM7 2h2v3H7zM13 2h-2v3h2" stroke="#fff" fill="none" />
        <path d="M5 9h6M5 12h4" stroke="#aaa" />
      </svg>
      {menus.map(([name, key]) => (
        <button key={key} type="button" className="w-11 shrink-0 text-left text-[10px] leading-4 text-black">
          {name}(<u>{key}</u>)
        </button>
      ))}
      <div className="ml-auto flex gap-px">
        {["M3 9h5", "M5 3h5v4H8M3 5h5v5H3z", "M3 3l6 6M9 3L3 9"].map((d, i) => (
          <button key={d} type="button" aria-label={["Minimize document", "Restore document", "Close document"][i]} className="flex size-[15px] items-center justify-center border border-[#b3c4da] bg-[#f2f6fc]">
            <svg width="12" height="12" aria-hidden="true">
              <path d={d} fill="none" stroke="#5a6b82" strokeWidth={i === 1 ? 1 : 2} />
            </svg>
          </button>
        ))}
      </div>
    </nav>
  );
}

const standardTail = ["Library", "Shape Tools", "Stamp", "Frame", "Add", "Remove", "Back", "Forward", "Properties", "Panels", "Help"];
const snapTools = ["Dots", "Guides", "Snap Grid", "Snap Ruler", "Snap Box", "Snap Vertex", "Snap Glue", "Snap Lines", "Snap Page"];

function Toolbars() {
  return (
    <div className="flex shrink-0 flex-col gap-px bg-[#b9d5ff]">
      <div className="flex gap-[2px]">
        <Bar label="Standard">
          <Tool label="New" />
          <Arrow />
          <Tool label="Open" />
          <Arrow />
          {["Save", "Save All", "Mail", "Print", "Preview", "Spelling", "Find", "Cut", "Copy", "Paste", "Delete", "Format Painter", "Undo"].map((n) => (
            <Tool key={n} label={n} />
          ))}
          <Arrow />
          <Tool label="Redo" />
          <Arrow pale />
          {standardTail.map((n) => (
            <Tool key={n} label={n} active={n === "Shape Tools" || n === "Panels"} />
          ))}
        </Bar>
        <Bar label="Stencil">
          <Tool label="New Sheet" />
          <Tool label="Open Sheet" />
          <Tool label="Delete Sheet" />
          <Sep />
          <Tool label="Save Sheet" />
          <Sep />
          <Tool label="Large Icons" active />
          <Tool label="Small Icons" />
          <Tool label="Detail List" />
        </Bar>
      </div>
      <div className="flex gap-[2px]">
        <Bar label="Connectors">
          {connectors.map(([name, glyph]) => (
            <Tool key={name} label={name}>{glyph}</Tool>
          ))}
        </Bar>
        <Bar label="Shape operations">
          {booleans.map(([name, glyph]) => (
            <Tool key={name} label={name}>{glyph}</Tool>
          ))}
        </Bar>
      </div>
      <div className="flex">
        <Bar label="View">
          <Tool label="Draft" active />
          <Tool label="Pick" />
          {snapTools.map((n) => (
            <Tool key={n} label={n} active />
          ))}
          {["Zoom", "Distribute", "Align Grid", "Hand", "Page Hand"].map((n) => (
            <Tool key={n} label={n} />
          ))}
          <Combo label="Layer" value="(No Layer)" className="ml-[2px] w-[69px]" />
          {["Layers", "Layer Props", "Zoom Out", "Zoom In"].map((n) => (
            <Tool key={n} label={n} />
          ))}
          <Combo label="Zoom level" value="100" className="mx-px w-[48px]" />
          <Tool label="Zoom 100" active />
          {["Fit Page", "Fit Width", "Fit Selection", "Zoom Area", "Path"].map((n) => (
            <Tool key={n} label={n} />
          ))}
        </Bar>
      </div>
      <div className="flex">
        <Bar label="Format">
          <Combo label="Font" value="Times New Roman" className="w-[122px]" />
          <Combo label="Font size" value="18" className="mx-[2px] w-[32px]" />
          {["Bold", "Italic", "Underline", "Left", "Center", "Right", "Top", "Middle", "Bottom", "Bullets", "Grow", "Shrink"].map((n) => (
            <Tool key={n} label={n} />
          ))}
          {["Font Color", "Line Color", "Fill Color", "Line Weight", "Line Style"].map((n) => (
            <Fragment key={n}>
              <Tool label={n} />
              <Arrow />
            </Fragment>
          ))}
        </Bar>
      </div>
    </div>
  );
}

function PanelHeader({ title }: { title: string }) {
  return (
    <div className="flex h-[19px] shrink-0 items-center bg-linear-to-b from-[#dce9fb] to-[#a9cbfa] pl-[7px] pr-[3px]">
      <h2 className="flex-1 text-[11px] leading-4 text-[#17213a]">{title}</h2>
      <button type="button" aria-label={`${title} options`} className="flex h-4 w-3 items-center justify-center">
        <svg width="6" height="4" aria-hidden="true"><path d="M0 0h6L3 4z" /></svg>
      </button>
      <button type="button" aria-label={`Close ${title}`} className="flex h-4 w-3 items-center justify-center">
        <svg width="8" height="8" aria-hidden="true"><path d="M1 1l6 6M7 1L1 7" stroke="#111" strokeWidth="1.500" /></svg>
      </button>
    </div>
  );
}

function GroupHeader({ name }: { name: string }) {
  return (
    <button type="button" className="flex h-[18px] w-full shrink-0 items-center gap-[4px] border-b border-[#33435c] bg-linear-to-b from-[#e4eefb] to-[#adcdf9] pl-[4px] pr-[3px] text-left text-[10px] leading-4 text-[#17213a]">
      <Glyph className="size-[11px]">{sheet}</Glyph>
      <span className="flex-1">{name}-&lt;评估版&gt;</span>
      <span className="h-[13px] border-l-2 border-dotted border-[#8fa6c8]" />
    </button>
  );
}

const stencil = [
  { name: "tCloseBezie", art: "M2 9c3-2 6 0 12 5 6-5 9-7 12-5v10c-3 2-6-1-12-5-6 4-9 7-12 5z" },
  { name: "tEllipseShap", art: "M14 5c6 0 11 4 11 9s-5 9-11 9S3 19 3 14 8 5 14 5z" },
  { name: "arallelogra", art: "M10 8h14l-6 12H4z" },
  { name: "Round Rectangle", art: "M8 5h12q4 0 4 4v10q0 4-4 4H8q-4 0-4-4V9q0-4 4-4z" },
  { name: "Diamond", art: "M14 7l10 7-10 7-10-7z" },
  { name: "Trapezoid", art: "M4 6h20l-4 14H8z", selected: true },
];

function ToolBoxPanel() {
  return (
    <section className="flex shrink-0 flex-col">
      <PanelHeader title="ToolBox Bar" />
      <div className="mx-[3px] flex flex-col border border-[#6f7f9b]">
        <GroupHeader name="basic shapes" />
        <div className="flex h-[198px] bg-linear-to-b from-[#eff1fb] to-[#e9f5f5]">
          <div className="relative grid min-w-0 flex-1 grid-cols-2 auto-rows-[61px] pt-[9px] pr-4 pl-[9px]">
            <svg className="absolute inset-0 size-full" aria-hidden="true">
              <text x="47" y="100" transform="rotate(-19 47 100)" fontSize="12" fill="#f3a5a1" fontFamily="Liberation Sans, Noto Sans CJK SC, sans-serif">&lt;评估版本</text>
            </svg>
            {stencil.map((s) => (
              <button key={s.name} type="button" className="relative flex min-w-0 flex-col items-center">
                <svg className="h-[27px] w-[27px] shrink-0 overflow-visible" viewBox="0 0 28 28" aria-hidden="true">
                  {s.selected && <path d={s.art} transform="translate(2 1)" fill="#2f8f8a" />}
                  <path d={s.art} fill="#fde0b8" stroke="#222" strokeWidth="1.300" strokeLinejoin="round" />
                </svg>
                <span
                  className={`mt-1 flex min-h-5 justify-center pt-px text-center font-['Liberation_Mono',monospace] text-[8px] leading-[9px] font-bold text-black ${
                    s.selected ? "w-[54px] border border-[#666] bg-[#f3f2f6]" : "w-[59px]"
                  }`}
                >
                  {s.name}
                </span>
              </button>
            ))}
          </div>
          <div className="flex w-[13px] flex-col items-center justify-between bg-[#efeff1] py-1">
            <svg width="5" height="4" aria-hidden="true"><path d="M0 4h5L2.500 0z" fill="#444" /></svg>
            <span className="mt-8 h-[17px] w-[11px] border border-[#8c8f96] bg-linear-to-r from-white to-[#d0d2d8] px-[2px] pt-1">
              <span className="block h-[6px] border-y-2 border-double border-[#666]" />
            </span>
            <svg width="5" height="4" aria-hidden="true"><path d="M0 0h5L2.500 4z" fill="#444" /></svg>
          </div>
        </div>
        {["HMI SCADA", "Form Objects", "Link And Lines", "FlowChart"].map((n) => (
          <GroupHeader key={n} name={n} />
        ))}
      </div>
    </section>
  );
}

const shapeRows: [string, string][] = [
  ["椭圆", "(33"],
  ["矩形", "(19"],
  ["定制组件", "(4"],
  ["椭圆", "(19"],
  ["定制组件", "(4"],
  ["园角矩形", "(1"],
  ["园角矩形", "(4"],
  ["折线连接", "(2"],
  ["折线连接", "(3"],
  ["连接线", "(22"],
  ["连接线", "(22"],
  ["连接线", "(49"],
  ["连接线", "(49"],
  ["连接线", "(28"],
  ["定制组件", "(6"],
];

const nodeGlyph = (
  <>
    <path d="M4 3h8M4 13h8M3 4v8M13 4v8" stroke="#777" fill="none" />
    <circle cx="8" cy="8" r="3.500" fill="#fff" stroke="#888" />
    <path d="M1 1h4v4H1zM11 1h4v4h-4zM1 11h4v4H1zM11 11h4v4h-4z" fill="#1c8a2c" />
  </>
);

function ShapesPanel() {
  return (
    <section className="flex min-h-0 flex-1 flex-col">
      <PanelHeader title="Shapes Bar" />
      <div className="mx-[3px] flex min-h-0 flex-1 flex-col border-2 border-[#777f8e] bg-white text-black">
        <div className="flex min-h-0 flex-1">
          <div className="min-w-0 flex-1 overflow-hidden">
            <div className="flex h-4 items-center pl-[4px] text-[11px] leading-4">
              <span className="flex size-[9px] items-center justify-center border border-[#666]"><span className="h-px w-[5px] bg-black" /></span>
              <span className="w-[5px] border-t border-dotted border-[#777]" />
              <Glyph className="mr-[6px] size-[14px]">
                {L("M4 4h6v6H4zM7 7h6v6H7z", "#25348c", 1.4)}
                {F("M1 1h3v3H1zM12 1h3v3h-3zM1 12h3v3H1zM12 12h3v3h-3z")}
              </Glyph>
              Shapes List
            </div>
            <ul className="ml-[27px] grid h-[249px] auto-rows-fr border-l border-dotted border-[#888]">
              {shapeRows.map(([name, pos], i) => (
                <li key={i} className="flex items-center text-[10px] leading-4 whitespace-nowrap">
                  <span className="mr-[2px] w-[10px] border-t border-dotted border-[#888]" />
                  <Glyph className="size-[13px]">{nodeGlyph}</Glyph>
                  <span className="ml-[6px] flex-1">{name}</span>
                  <span className="w-5 shrink-0 text-right">{pos}</span>
                </li>
              ))}
            </ul>
            <Glyph className="ml-10 size-[13px]">{nodeGlyph}</Glyph>
          </div>
          <div className="flex w-[13px] flex-col items-center bg-[#f0f0f2]">
            <svg className="my-[6px] shrink-0" width="5" height="3" aria-hidden="true"><path d="M0 3h5L2.500 0z" fill="#444" /></svg>
            <span className="flex h-[142px] w-[11px] shrink-0 items-center justify-center border border-[#8c8f96] bg-linear-to-r from-white to-[#cfd1d7]">
              <span className="h-[6px] w-[5px] border-y-2 border-double border-[#555]" />
            </span>
            <svg className="mt-auto mb-[6px] shrink-0" width="5" height="3" aria-hidden="true"><path d="M0 0h5L2.500 3z" fill="#444" /></svg>
          </div>
        </div>
        <div className="flex h-[14px] shrink-0 items-center gap-[6px] bg-[#f0f0f2] pl-[4px]">
          <svg width="4" height="5" aria-hidden="true"><path d="M4 0v5L0 2.500z" /></svg>
          <span className="flex h-3 w-[75px] items-center justify-center border border-[#8c8f96] bg-linear-to-b from-white to-[#cfd1d7]">
            <span className="h-[5px] w-[6px] border-x-2 border-double border-[#555]" />
          </span>
          <svg className="ml-9" width="4" height="5" aria-hidden="true"><path d="M0 0v5l4-2.500z" /></svg>
        </div>
      </div>
    </section>
  );
}

// the drawing is laid out in window units; the canvas view starts at (195, 157)
const VIEW_X = 195;
const VIEW_Y = 157;
const ORIGIN_X = 261;
const ORIGIN_Y = 140;
const INCH = 79.8;

function HorizontalRuler() {
  const ticks = Array.from({ length: 145 }, (_, i) => i - 12);
  return (
    <svg className="h-[15px] min-w-0 flex-1 bg-linear-to-b from-white to-[#bcbcbc]" aria-hidden="true">
      <g transform={`translate(${-VIEW_X} 0)`}>
        {ticks.map((i) => {
          const len = i % 16 === 0 ? 15 : i % 8 === 0 ? 9 : i % 4 === 0 ? 6 : 2;
          return <path key={i} d={`M${Math.round(ORIGIN_X + (i * INCH) / 16) - 0.5} 15v-${len}`} stroke="#555" />;
        })}
        {Array.from({ length: 9 }, (_, i) => (
          <text key={i} x={ORIGIN_X + 2 + i * INCH} y="8" fontSize="9" fill="#222" fontFamily="Liberation Sans, sans-serif">{i}</text>
        ))}
        <path d="M458.500 0v15" stroke="#f03020" />
      </g>
    </svg>
  );
}

function VerticalRuler() {
  const ticks = Array.from({ length: 125 }, (_, i) => i + 3);
  return (
    <svg className="h-full w-[15px] shrink-0 bg-linear-to-r from-white to-[#b4b4b4]" aria-hidden="true">
      <g transform={`translate(0 ${-VIEW_Y})`}>
        {ticks.map((i) => {
          const len = i % 16 === 0 ? 15 : i % 8 === 0 ? 9 : i % 4 === 0 ? 6 : 2;
          return <path key={i} d={`M15 ${Math.round(ORIGIN_Y + (i * INCH) / 16) - 0.5}h-${len}`} stroke="#555" />;
        })}
        {[1, 2, 3, 4, 5, 6, 7].map((n) => (
          <text key={n} transform={`translate(8 ${ORIGIN_Y + 7 + n * INCH}) rotate(-90)`} fontSize="9" fill="#222" fontFamily="Liberation Sans, sans-serif">{n}</text>
        ))}
        <path d="M0 702.500h15" stroke="#f03020" />
      </g>
    </svg>
  );
}

const roundBox = (x: number, y: number) =>
  `M${x + 10} ${y}h57q10 0 10 10v57q0 10 -10 10h-57q-10 0 -10 -10v-57q0 -10 10 -10z`;
const circle = (x: number, y: number) => `M${x - 38} ${y}a38 38 0 1 0 76 0a38 38 0 1 0 -76 0z`;

const shapes = [
  { d: circle(578, 208), cx: 578, cy: 208, label: "椭圆" },
  { d: "M420 310h77v76h-77z", cx: 458, cy: 348, label: "矩形" },
  { d: "M661 310h38l19 19v38l-19 19h-38l-20 -19v-38z", cx: 679, cy: 348, label: "定制组件" },
  { d: "M827 310l39 38l-39 38l-38 -38z", cx: 827, cy: 348 },
  { d: roundBox(276, 462), cx: 315, cy: 501 },
  { d: circle(458, 500), cx: 458, cy: 501, label: "椭圆" },
  { d: "M661 462h57l-19 77h-57z", cx: 680, cy: 501 },
  { d: "M790 462h75l-18 77h-38z", cx: 827, cy: 501 },
  { d: "M315 602l38 38l-38 39l-39 -39z", cx: 315, cy: 640 },
  { d: roundBox(420, 602), cx: 458, cy: 640, label: "园角矩形" },
  { d: roundBox(641, 602), cx: 680, cy: 640, label: "园角矩形" },
];

const links = [
  { d: "M578 247V276.500H458.500V309" },
  { d: "M578 276.500H679.500V309" },
  { d: "M458.500 388V450", tip: [458, 461, 90] },
  { d: "M679.500 388V450", tip: [680, 461, 90] },
  { d: "M720 347.500H778", tip: [788, 348, 0] },
  { d: "M827.500 388V450", tip: [827, 461, 90] },
  { d: "M498 500.500H640", tip: [650, 501, 0] },
  { d: "M796 500.500H720", tip: [710, 501, 180] },
  { d: "M420 500.500H366", tip: [355, 501, 180] },
  { d: "M314.500 541V590", tip: [315, 601, 90] },
  { d: "M458.500 541V590", tip: [458, 601, 90] },
  { d: "M679.500 541V590", tip: [680, 601, 90] },
  { d: "M355 640.500H410", tip: [420, 640, 0] },
  { d: "M314.500 681V742", tip: [315, 752, 90] },
];

const headPath = "M0 0L-23 -8.500Q-15 -4 -13 -1V1Q-15 4 -23 8.500z";
// the lower-right half of a head peeks out as its shadow
const headShadow = "M-1 2L-15 7L-9 3z";
const headShadowDown = "M0 -2L-13 -7L-8 -2z";

function GridLines() {
  return (
    <>
      {Array.from({ length: 61 }, (_, i) => {
        const x = Math.round(ORIGIN_X + (i * INCH) / 8) - 0.5;
        return <path key={i} d={`M${x} 140V1600`} stroke={i % 8 === 0 ? "#c2c2c2" : i % 4 === 0 ? "#e0e0e0" : "#f0f0f0"} />;
      })}
      {Array.from({ length: 140 }, (_, i) => {
        const y = Math.round(ORIGIN_Y + (i * INCH) / 8) - 0.5;
        return <path key={i} d={`M261 ${y}H866`} stroke={i % 8 === 0 ? "#c2c2c2" : i % 4 === 0 ? "#e0e0e0" : "#f0f0f0"} />;
      })}
    </>
  );
}

function Canvas() {
  return (
    <svg className="h-full min-w-0 flex-1 bg-[#8f98b1]" role="img" aria-label="Flow diagram">
      <defs>
        <clipPath id="page">
          <path d="M261 140h605v1460H261z" />
        </clipPath>
      </defs>
      <g transform={`translate(${-VIEW_X} ${-VIEW_Y})`}>
        <path d="M866 140h6v1460h-6z" fill="#a6a6a6" />
        <path d="M261 140h605v1460H261z" fill="#fff" />
        <GridLines />
        <path d="M260.500 140v1460M866.500 140v1460" stroke="#000" strokeWidth="1.500" />
        <path d="M265.500 140v1460M862.500 140v1460M867.500 140v1460" stroke="#1414d8" strokeDasharray="3 2" />
        <g clipPath="url(#page)">
          <g transform="translate(366 487) rotate(-20.500)" fontSize="30" fill="#f6bcb6" fontWeight="350" fontFamily="Liberation Sans, Noto Sans CJK SC, sans-serif">
            <text textAnchor="end">&lt;评估版本&gt;</text>
            <text>正式版本(全源码)请访问http://www.uanc</text>
          </g>
        </g>
        {links.map((l) => (
          <path key={l.d} d={l.d} fill="none" stroke="#10aef2" strokeWidth="2" />
        ))}
        {shapes.map((s) => (
          <g key={s.d} strokeWidth="3.500">
            <path d={s.d} transform="translate(2 2)" fill="#f58220" stroke="#f58220" />
            <path d={s.d} fill="#92d050" stroke="#000" />
          </g>
        ))}
        {links.map((l) =>
          l.tip ? (
            <g key={l.d} transform={`translate(${l.tip[0]} ${l.tip[1]}) rotate(${l.tip[2]})`}>
              <path d={l.tip[2] === 0 ? headShadow : headShadowDown} fill="#f58220" stroke="#f58220" />
              <path d={headPath} fill="#10aef2" />
            </g>
          ) : null,
        )}
        <g fontSize="20" fontWeight="300" fill="#e8220c" textAnchor="middle" fontFamily="Noto Sans CJK SC, sans-serif">
          {shapes.map((s) => s.label && <text key={s.d} x={s.cx} y={s.cy + 6}>{s.label}</text>)}
          <text x="680" y="560">定制组件</text>
        </g>
        {shapes.map((s) => (
          <path key={s.d} d={`M${s.cx - 3} ${s.cy - 3}l6 6m0 -6l-6 6`} stroke="#6a6af2" />
        ))}
      </g>
    </svg>
  );
}

function ScrollButton({ label, d }: { label: string; d: string }) {
  return (
    <button type="button" aria-label={label} className="flex h-[13px] w-[14px] shrink-0 items-center justify-center border border-t-white border-r-[#555] border-b-[#555] border-l-white bg-[#f0f0f0]">
      <svg width="7" height="7" aria-hidden="true"><path d={d} /></svg>
    </button>
  );
}

function DrawingArea() {
  return (
    <main className="flex min-w-0 flex-1 flex-col border-t border-l border-[#444]">
      <div className="flex min-h-0 flex-1">
        <div className="flex min-w-0 flex-1 flex-col">
          <div className="flex h-4 shrink-0 border-b border-[#555]">
            <svg className="h-[15px] w-[15px] shrink-0 bg-white" aria-hidden="true">
              <path d="M8 0v15M0 10.500h15" stroke="#1b2bd0" strokeDasharray="3 2" />
            </svg>
            <HorizontalRuler />
          </div>
          <div className="flex min-h-0 flex-1">
            <VerticalRuler />
            <Canvas />
          </div>
        </div>
        <div className="flex w-[14px] shrink-0 flex-col bg-[#fafafa]">
          <ScrollButton label="Scroll up" d="M0 5h7L3.500 1z" />
          <span className="h-10 shrink-0" />
          <span className="h-[364px] shrink-0 border-t border-r-2 border-b-2 border-white border-r-[#777] border-b-[#777] bg-[#efefef]" />
          <span className="flex-1" />
          <ScrollButton label="Scroll down" d="M0 2h7L3.500 6z" />
        </div>
      </div>
      <div className="flex h-[15px] shrink-0 bg-[#d3e9f8]">
        <div className="flex w-[56px] shrink-0 items-center justify-between bg-[#c4e0f3] px-1">
          {["M1 0v7M6 1v5L3 3.500z", "M5 1v5L2 3.500z", "M2 1v5l3-2.500z", "M6 0v7M1 1v5l3-2.500z"].map((d, i) => (
            <button key={d} type="button" aria-label={["First page", "Previous page", "Next page", "Last page"][i]}>
              <svg width="7" height="7" aria-hidden="true"><path d={d} fill="#14304f" stroke="#14304f" strokeWidth="0.700" /></svg>
            </button>
          ))}
        </div>
        <button type="button" className="relative w-[66px] shrink-0 text-black">
          <svg className="absolute inset-0 size-full" aria-hidden="true">
            <path d="M0 0h66l-6 14H7z" fill="#fff" />
            <path d="M0 0l7 14h53L66 0" fill="none" stroke="#000" />
          </svg>
          <span className="relative flex items-center justify-center gap-4 text-[13px] leading-[14px] font-bold">
            <span>页面</span>
            <span className="font-['Liberation_Serif',serif]">0</span>
          </span>
        </button>
        <span className="flex-[275] border-t-2 border-[#222] bg-linear-to-b from-[#e6f3fc] to-[#b9ddf3]" />
        <span className="w-1 shrink-0 bg-[#f4f4f4]" />
        <div className="flex flex-[354] items-center bg-[#f0f0f0]">
          <ScrollButton label="Scroll left" d="M5 0v7L1 3.500z" />
          <span className="h-full flex-1 border-r border-b border-[#777] bg-[#efefef]" />
          <ScrollButton label="Scroll right" d="M2 0v7l4-3.500z" />
        </div>
        <span className="w-[14px] shrink-0 bg-[#f2f2f2]" />
      </div>
    </main>
  );
}

function DrawingTools() {
  return (
    <aside className="flex w-[46px] shrink-0 flex-col border-r border-[#8aa4c8] bg-[#b9d5ff] pl-[2px]">
      <div className="flex w-[43px] flex-col bg-linear-to-r from-[#d4e5fb] via-[#c3dafb] to-[#b4d1fa] pt-[5px]">
        <span className="mx-[3px] mb-[4px] border-t-2 border-dotted border-[#8b9ab5]" />
        <div className="grid h-[421px] auto-rows-fr grid-cols-2 items-center justify-items-center pr-[4px] pl-[2px]">
          {drawTools.map(([name, glyph], i) =>
            name ? (
              <Tool key={i} label={name} active={name === "Pointer"}>{glyph}</Tool>
            ) : (
              <span key={i} />
            ),
          )}
        </div>
        <span className="h-2 bg-linear-to-r from-[#b4d0f6] to-[#5f8ed2]" />
      </div>
    </aside>
  );
}

function StatusBar() {
  return (
    <footer className="flex h-[18px] shrink-0 items-center border-t border-[#e3eefb] bg-[#b7d3fc] text-[10px] leading-4 text-black">
      <span className="w-[355px] shrink-0 pl-px">创建组件间连接线</span>
      <span className="w-[168px] shrink-0 border-x border-[#a3c1ec] pl-px">(鼠标:2.48 in,7.05 in)</span>
      <span className="ml-[2px] w-[201px] shrink-0 border-x border-[#a3c1ec] pl-px">(位置:0.00 in,0.00 in)</span>
      <span className="ml-[2px] w-[201px] shrink-0 border-x border-[#a3c1ec] pl-px">(宽 X 高:0.00 in,0.00 in)</span>
      <span className="ml-auto pr-2">数</span>
      <svg width="10" height="14" aria-hidden="true"><path d="M0 13L9 3M4 13l5-6M8 13l1-1" stroke="#7b8ba6" strokeWidth="1.500" /></svg>
    </footer>
  );
}

export default function App() {
  return (
    <div className="flex h-screen w-full flex-col overflow-hidden border-x border-b-2 border-[#19485f] bg-[#9fc7e8] font-['Noto_Sans','Noto_Sans_CJK_SC',sans-serif]">
      <TitleBar />
      <div className="flex min-h-0 flex-1 flex-col border-x-[5px] border-r-[#b5dcf0] border-b-[3px] border-l-[#b4cee6] border-b-[#a5d4ee]">
        <div className="flex min-h-0 flex-1 flex-col border border-t-0 border-[#64809f] bg-[#b9d5ff]">
          <MenuBar />
          <Toolbars />
          <div className="flex min-h-0 flex-1">
            <div className="flex w-[166px] shrink-0 flex-col bg-[#b7d3fd]">
              <ToolBoxPanel />
              <span className="my-1 shrink-0 border-t-2 border-dotted border-[#8398b8]" />
              <ShapesPanel />
            </div>
            <span className="mx-[2px] shrink-0 border-l-2 border-dotted border-[#8398b8]" />
            <DrawingArea />
            <DrawingTools />
          </div>
          <div className="flex shrink-0 border-t border-[#eaf3ff]">
            <Bar label="Arrange">
              {arrangeGlyphs.map((glyph, i) => (
                <Tool key={i} label={`Arrange ${i + 1}`}>{glyph}</Tool>
              ))}
            </Bar>
          </div>
          <StatusBar />
        </div>
      </div>
    </div>
  );
}
